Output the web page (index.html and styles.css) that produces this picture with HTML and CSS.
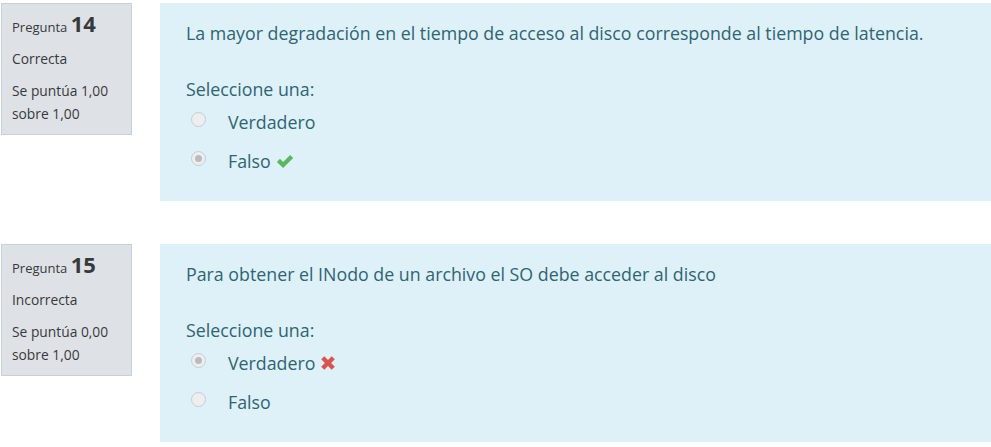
FILE: index.html
```html
<!DOCTYPE html>
<html lang="es">
<head>
<meta charset="utf-8">
<link rel="stylesheet" href="styles.css">
</head>
<body>
<div class="que">
  <div class="info">
    <div class="no">Pregunta <span class="qno">14</span></div>
    <div class="state">Correcta</div>
    <div class="grade">Se puntúa 1,00 sobre 1,00</div>
  </div>
  <div class="formulation">
    <div class="qtext">La mayor degradación en el tiempo de acceso al disco corresponde al tiempo de latencia.</div>
    <div class="prompt">Seleccione una:</div>
    <div class="answer">
      <div class="opt"><span class="radio"></span><span class="lbl">Verdadero</span></div>
      <div class="opt"><span class="radio checked"></span><span class="lbl">Falso</span>
        <svg class="icon" viewBox="0 0 16 16" width="18" height="18"><path d="M0.8 8.8 L3.5 6.1 L6.3 8.9 L12.6 2.6 L15.3 5.3 L6.3 14.3 Z" fill="#5cb85c"/></svg>
      </div>
    </div>
  </div>
</div>
<div class="que">
  <div class="info">
    <div class="no">Pregunta <span class="qno">15</span></div>
    <div class="state">Incorrecta</div>
    <div class="grade">Se puntúa 0,00 sobre 1,00</div>
  </div>
  <div class="formulation">
    <div class="qtext">Para obtener el INodo de un archivo el SO debe acceder al disco</div>
    <div class="prompt">Seleccione una:</div>
    <div class="answer">
      <div class="opt"><span class="radio checked"></span><span class="lbl">Verdadero</span>
        <svg class="icon" viewBox="0 0 16 16" width="16" height="16"><path d="M1.2 4.3 L4.3 1.2 L8 4.9 L11.7 1.2 L14.8 4.3 L11.1 8 L14.8 11.7 L11.7 14.8 L8 11.1 L4.3 14.8 L1.2 11.7 L4.9 8 Z" fill="#d9534f"/></svg>
      </div>
      <div class="opt"><span class="radio"></span><span class="lbl">Falso</span></div>
    </div>
  </div>
</div>
</body>
</html>
```
FILE: styles.css
```css
html, body {
  margin: 0;
  padding: 0;
  background: #fff;
}
body {
  padding: 3px 0 0 1px;
  font-family: "Open Sans", "Noto Sans", sans-serif;
}
.que {
  display: flex;
  align-items: flex-start;
  margin-bottom: 43px;
}
.info {
  box-sizing: border-box;
  width: 131px;
  height: 132px;
  flex: none;
  background: #dee2e6;
  border: 1px solid #cad0d7;
  padding: 4px 10px 0 10px;
  color: #373a3c;
  font-size: 13.8px;
  line-height: 23px;
}
.no {
  font-size: 13px;
  line-height: 30px;
}
.qno {
  font-size: 22px;
  font-weight: 700;
  color: #373a3c;
}
.state {
  margin-top: 5px;
  margin-bottom: 9px;
}
.formulation {
  flex: 1;
  margin-left: 28px;
  height: 198px;
  box-sizing: border-box;
  background: #def1f8;
  color: #2f6473;
  padding: 17px 26px 0 26px;
  font-size: 17.8px;
}
.qtext {
  line-height: 26px;
}
.prompt {
  margin-top: 30px;
  line-height: 26px;
}
.answer {
  margin-top: 7px;
  display: flex;
  flex-direction: column;
  gap: 13px;
}
.opt {
  display: flex;
  align-items: center;
  height: 26px;
}
.radio {
  box-sizing: border-box;
  width: 15px;
  height: 15px;
  border-radius: 50%;
  border: 1px solid #c9ccce;
  background: #eceeef;
  margin-left: 5px;
  margin-right: 22px;
  margin-top: -5px;
  display: flex;
  align-items: center;
  justify-content: center;
}
.radio.checked::after {
  content: "";
  width: 7px;
  height: 7px;
  border-radius: 50%;
  background: #b8bcbf;
}
.icon {
  margin-left: 5px;
}
```
